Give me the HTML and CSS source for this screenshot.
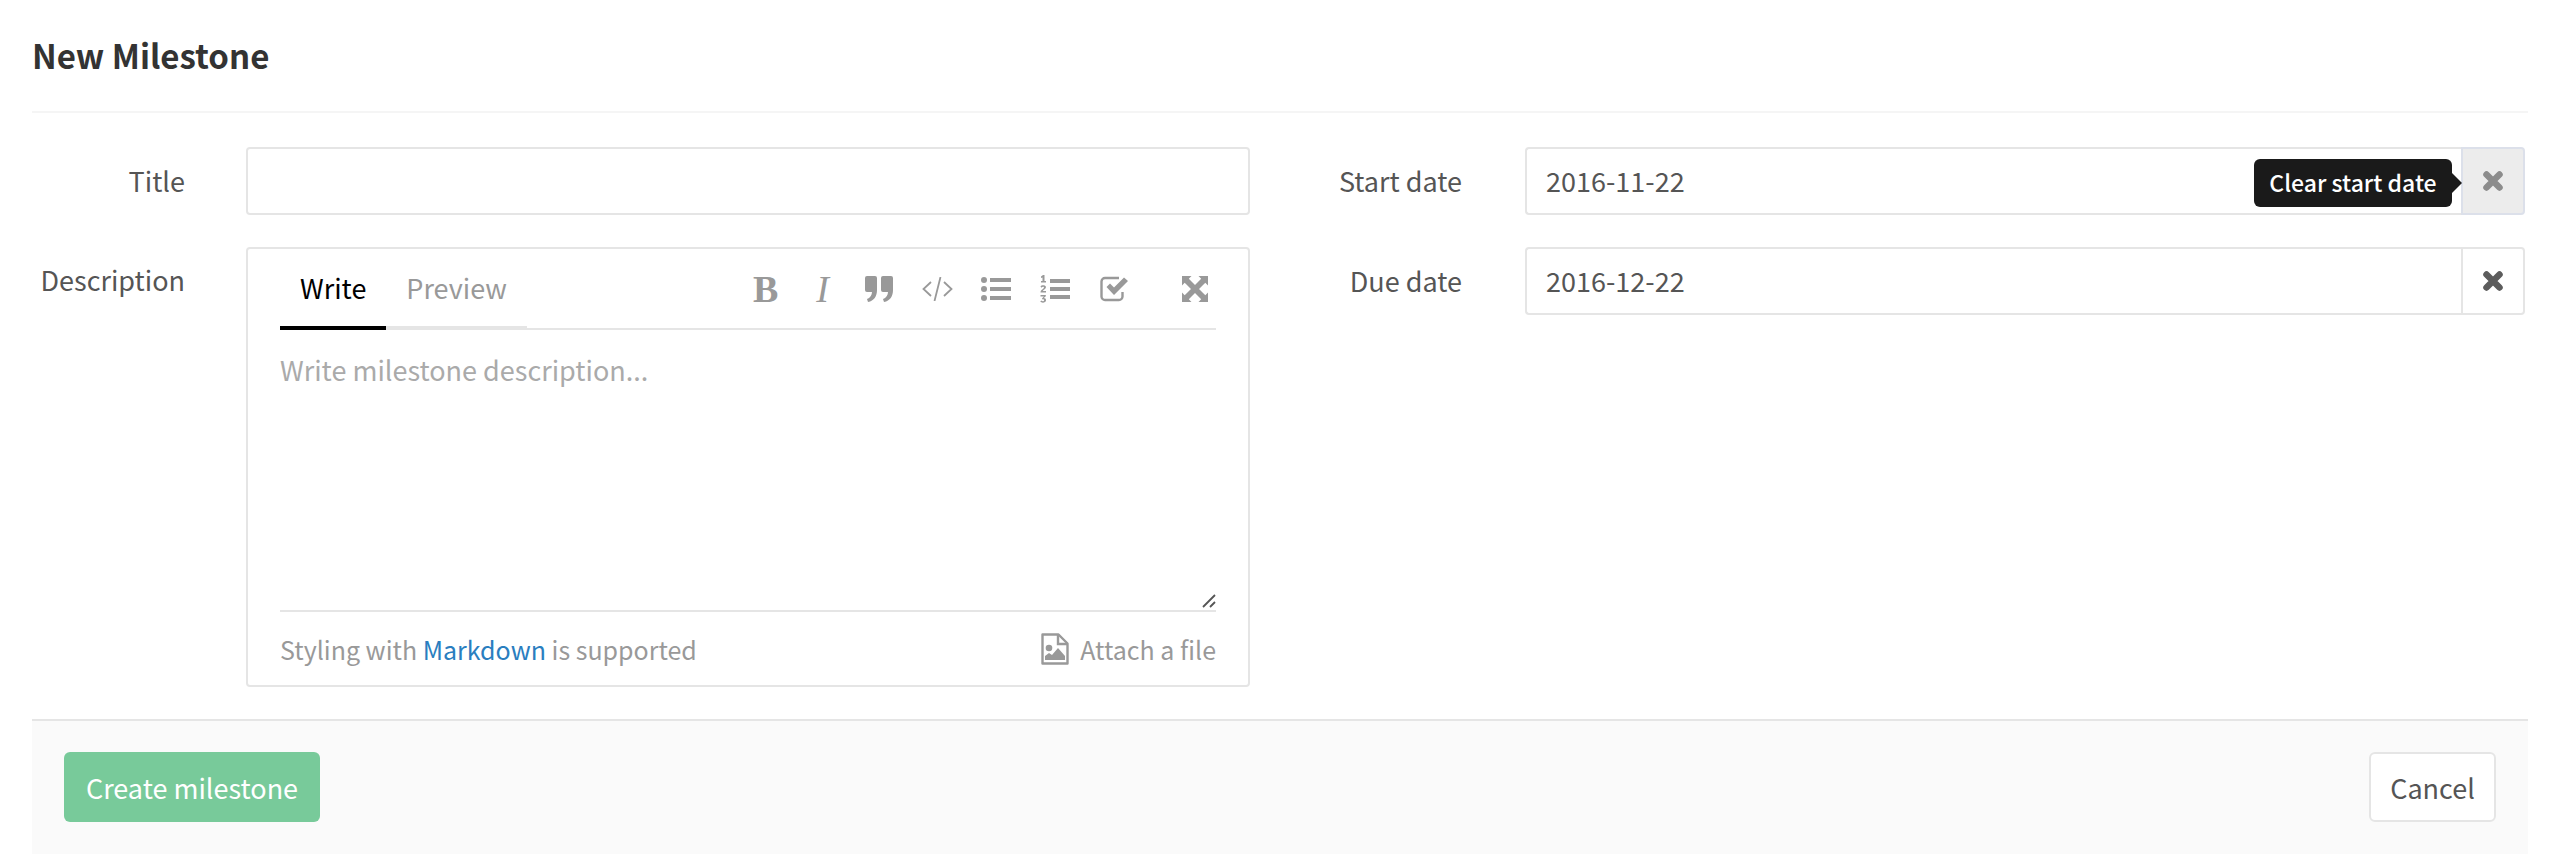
FILE: index.html
```html
<!DOCTYPE html>
<html lang="en">
<head>
  <meta charset="UTF-8">
  <title>New Milestone</title>
  <link rel="stylesheet" href="styles.css">
</head>
<body>
<div class="page">
  <h3 class="page-title">New Milestone</h3>

  <form class="milestone-form">
    <div class="form-columns">
      <div class="col-left">
        <div class="field">
          <label class="field-label">Title</label>
          <div class="text-input"></div>
        </div>
        <div class="field">
          <label class="field-label label-top">Description</label>
          <div class="md-area">
            <div class="md-header">
              <ul class="md-tabs">
                <li class="md-tab active">Write</li>
                <li class="md-tab">Preview</li>
              </ul>
              <div class="md-toolbar">
                <span class="tool tool-b">B</span>
                <span class="tool tool-i">I</span>
                <svg class="icon icon-quote" width="28" height="26" viewBox="0 0 28 26"><path d="M0 2a2 2 0 0 1 2-2h8a2 2 0 0 1 2 2v12c0 6-3 11-9 12l-1-3c3-1 5-4 5-7H2a2 2 0 0 1-2-2zM16 2a2 2 0 0 1 2-2h8a2 2 0 0 1 2 2v12c0 6-3 11-9 12l-1-3c3-1 5-4 5-7h-5a2 2 0 0 1-2-2z"/></svg>
                <svg class="icon icon-code" width="31" height="24" viewBox="0 0 31 24"><path d="M9 5 1.500 12 9 19M22 5l7.500 7L22 19M18.500 0l-6 24" fill="none" stroke="#999" stroke-width="1.800"/></svg>
                <svg class="icon icon-ul" width="30" height="26" viewBox="0 0 30 26"><circle cx="3" cy="4" r="3"/><circle cx="3" cy="13" r="3"/><circle cx="3" cy="22" r="3"/><path d="M9 2h21v4H9zM9 11h21v4H9zM9 20h21v4H9z"/></svg>
                <svg class="icon icon-ol" width="30" height="28" viewBox="0 0 30 28"><path d="M1 1.500 3 0h1.500v6H6v1.500H1V6h1.500V2.500L1 3zM.500 11.500c.500-1.500 5-2 5.500.500 0 2-2.500 2.500-3.200 4H6v1.500H.500c0-3 3.500-3.500 3.500-5.300-.5-.7-1.800-.5-2.500.5zM.500 20h5.300v1.300L3.800 23c1.500 0 2.400 1 2.200 2.500-.3 2.500-4.500 2.800-5.700 1l1-1c1 1 2.800.8 2.800-.3 0-.8-1-1-2-.8v-1.100l1.800-1.800H.500zM10 4h20v4H10zM10 12h20v4H10zM10 20h20v4H10z"/></svg>
                <svg class="icon icon-check" width="28" height="26" viewBox="0 0 28 26"><path d="M19 2H5a3.500 3.500 0 0 0-3.500 3.500v15A3.500 3.500 0 0 0 5 24h14a3.500 3.500 0 0 0 3.500-3.500V16" fill="none" stroke="#999" stroke-width="2.400"/><path d="m6.500 11 3.500-3.500 4 4L24 1.500 28 5 14 19z"/></svg>
                <svg class="icon icon-expand" width="26" height="26" viewBox="0 0 26 26"><path d="M0 0h9.500L6.800 2.700 13 9l6.200-6.300L16.500 0H26v9.500l-2.700-2.700L17 13l6.300 6.200 2.700-2.700V26h-9.500l2.700-2.700L13 17l-6.200 6.300L9.500 26H0v-9.500l2.700 2.700L9 13 2.700 6.800 0 9.500z"/></svg>
              </div>
            </div>
            <div class="md-body">
              <span class="placeholder">Write milestone description...</span>
              <svg class="resizer" width="14" height="14" viewBox="0 0 14 14"><path d="M1 13 13 1M8 13l5-5" fill="none" stroke="#555" stroke-width="1.800"/></svg>
            </div>
            <div class="md-footer">
              <span class="md-hint">Styling with <a class="md-link" href="#">Markdown</a> is supported</span>
              <span class="attach">
                <svg class="icon" width="28" height="32" viewBox="0 0 28 32"><path d="M1.500 1.500h16l9 9v20h-25z" fill="none" stroke="#999" stroke-width="2.400" stroke-linejoin="round"/><path d="M17 2v9h9" fill="none" stroke="#999" stroke-width="2.400"/><circle cx="8" cy="15" r="3.300"/><path d="M4 27v-4l4-3 3 2 6-7 7 8v4z"/></svg>
                Attach a file
              </span>
            </div>
          </div>
        </div>
      </div>

      <div class="col-right">
        <div class="field">
          <label class="field-label date-label">Start date</label>
          <div class="input-group">
            <div class="date-input">2016-11-22</div>
            <button type="button" class="clear-btn hover">
              <svg width="20" height="20" viewBox="0 0 20 20"><path d="M3.500 3.500l13 13M16.500 3.500l-13 13" stroke="#8c8c8c" stroke-width="6.500" stroke-linecap="round"/></svg>
            </button>
            <div class="tooltip">Clear start date</div>
          </div>
        </div>
        <div class="field">
          <label class="field-label date-label">Due date</label>
          <div class="input-group">
            <div class="date-input">2016-12-22</div>
            <button type="button" class="clear-btn">
              <svg width="20" height="20" viewBox="0 0 20 20"><path d="M3.500 3.500l13 13M16.500 3.500l-13 13" stroke="#5c5c5c" stroke-width="6.500" stroke-linecap="round"/></svg>
            </button>
          </div>
        </div>
      </div>
    </div>

    <div class="form-actions">
      <button type="button" class="btn btn-create">Create milestone</button>
      <button type="button" class="btn btn-cancel">Cancel</button>
    </div>
  </form>
</div>
</body>
</html>
```
FILE: styles.css
```css
body {
  margin: 0;
  background-color: #fff;
  color: #555;
  font-family: "Noto Sans CJK JP", "Open Sans", sans-serif;
  font-size: 27px;
}

.page {
  padding: 0 32px;
}

.page-title {
  margin: 0;
  height: 111px;
  line-height: 110px;
  font-size: 33px;
  font-weight: 700;
  color: #333;
  border-bottom: 2px solid #f5f5f5;
}

.milestone-form {
  padding-top: 34px;
}

.form-columns {
  display: flex;
}

.col-left {
  width: 1218px;
}

.col-right {
  margin-left: 59px;
  width: 1216px;
}

.field {
  display: flex;
  margin-bottom: 32px;
}

.col-left .field:last-child {
  margin-bottom: 0;
}

.field-label {
  width: 153px;
  margin-right: 61px;
  flex: none;
  text-align: right;
  line-height: 68px;
}

.label-top {
  line-height: 40px;
  padding-top: 13px;
}

.date-label {
  width: 153px;
  margin-right: 63px;
}

.text-input {
  flex: 1;
  height: 64px;
  border: 2px solid #e5e5e5;
  border-radius: 4px;
}

/* markdown box */
.md-area {
  flex: 1;
  height: 436px;
  padding: 0 32px;
  border: 2px solid #e5e5e5;
  border-radius: 4px;
  display: flex;
  flex-direction: column;
}

.md-header {
  display: flex;
  justify-content: space-between;
  height: 79px;
  border-bottom: 2px solid #e5e5e5;
}

.md-tabs {
  display: flex;
  margin: 0;
  padding: 0;
  list-style: none;
}

.md-tab {
  height: 77px;
  padding: 0 20px;
  line-height: 78px;
  color: #999;
  border-bottom: 4px solid #e5e5e5;
}

.md-tab.active {
  color: #000;
  border-bottom-color: #000;
}

.md-toolbar {
  width: 463px;
  height: 79px;
  display: flex;
  align-items: center;
}

.icon {
  display: block;
  flex: none;
  fill: #999;
}

.tool {
  flex: none;
  color: #999;
  font-family: "Liberation Serif", serif;
  font-size: 38px;
  line-height: 38px;
}

.tool-b { font-weight: bold; }
.tool-i { font-style: italic; margin-left: 38px; }
.icon-quote { margin-left: 36px; }
.icon-code { margin-left: 29px; }
.icon-ul { margin-left: 28px; }
.icon-ol { margin-left: 29px; }
.icon-check { margin-left: 30px; }
.icon-expand { margin-left: 54px; }

.md-body {
  position: relative;
  flex: 1;
  padding-top: 20px;
  border-bottom: 2px solid #e5e5e5;
}

.placeholder {
  color: #aaa;
  line-height: 40px;
}

.resizer {
  position: absolute;
  right: 0;
  bottom: 2px;
}

.md-footer {
  display: flex;
  justify-content: space-between;
  align-items: center;
  height: 73px;
  font-size: 25px;
  color: #999;
}

.md-link {
  color: #2a7ebf;
  text-decoration: none;
}

.attach {
  display: flex;
  align-items: center;
  gap: 11px;
}

/* date inputs */
.input-group {
  position: relative;
  display: flex;
  width: 1000px;
  height: 68px;
}

.date-input {
  flex: 1;
  padding-left: 19px;
  border: 2px solid #e5e5e5;
  border-right: 0;
  border-radius: 4px 0 0 4px;
  line-height: 64px;
}

.clear-btn {
  width: 64px;
  padding: 0;
  display: flex;
  align-items: center;
  justify-content: center;
  background: #fff;
  border: 2px solid #e5e5e5;
  border-radius: 0 4px 4px 0;
}

.clear-btn.hover {
  background: #ececec;
  border-color: #dce0ea;
}

.tooltip {
  position: absolute;
  top: 12px;
  right: 73px;
  width: 198px;
  height: 48px;
  line-height: 46px;
  text-align: center;
  font-size: 23px;
  font-weight: 500;
  color: #fff;
  background: #1a1a1a;
  border-radius: 6px;
}

.tooltip::after {
  content: "";
  position: absolute;
  top: 14px;
  right: -10px;
  border-left: 10px solid #1a1a1a;
  border-top: 10px solid transparent;
  border-bottom: 10px solid transparent;
}

/* footer */
.form-actions {
  display: flex;
  justify-content: space-between;
  margin-top: 32px;
  padding: 31px 32px 32px;
  background: #fafafa;
  border-top: 2px solid #e5e5e5;
}

.btn {
  height: 70px;
  font-family: inherit;
  font-size: 27px;
  border-radius: 6px;
}

.btn-create {
  width: 256px;
  padding: 0;
  color: #fff;
  background: #78ca9a;
  border: 0;
}

.btn-cancel {
  width: 127px;
  padding: 0;
  color: #555;
  background: #fff;
  border: 2px solid #e5e5e5;
}
```
